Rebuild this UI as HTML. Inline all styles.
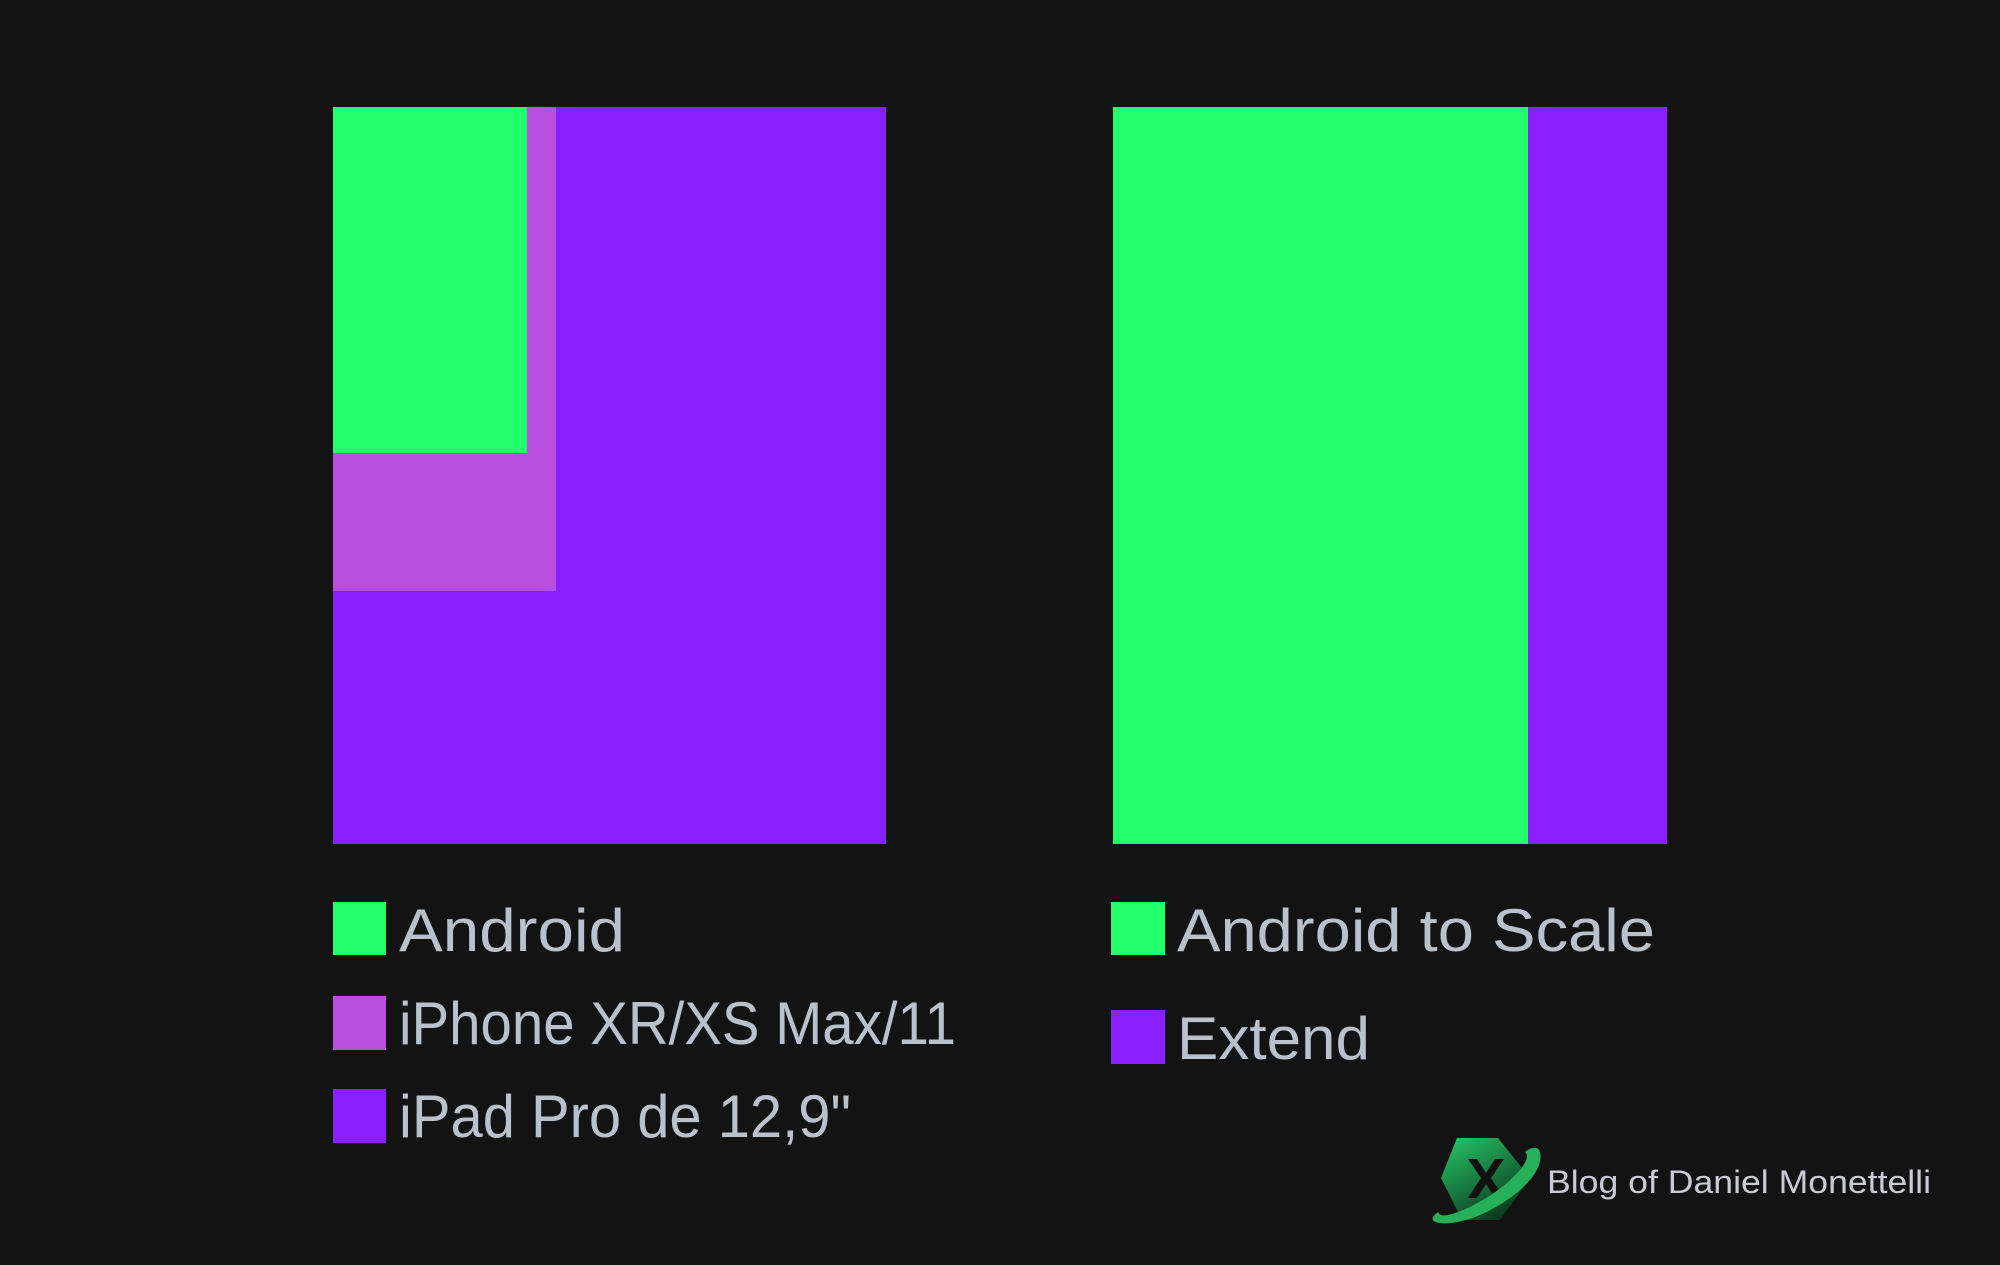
<!DOCTYPE html>
<html><head><meta charset="utf-8"><style>
html,body{margin:0;padding:0;background:#131313;}
svg{display:block}
</style></head><body>
<svg width="2000" height="1265" viewBox="0 0 2000 1265" xmlns="http://www.w3.org/2000/svg">
<rect width="2000" height="1265" fill="#131313"/>
<rect x="333" y="107" width="553" height="737" fill="#8a1fff"/>
<rect x="333" y="107" width="223" height="484" fill="#b84ee0"/>
<rect x="333" y="107" width="194" height="346" fill="#22ff6b"/>
<rect x="1113" y="107" width="554" height="737" fill="#8a1fff"/>
<rect x="1113" y="107" width="415" height="737" fill="#22ff6b"/>
<rect x="333" y="902" width="53" height="53" fill="#22ff6b"/>
<rect x="333" y="996" width="53" height="54" fill="#b84ee0"/>
<rect x="333" y="1089" width="53" height="54" fill="#8a1fff"/>
<rect x="1111" y="902" width="54" height="53" fill="#22ff6b"/>
<rect x="1111" y="1010" width="54" height="54" fill="#8a1fff"/>
<g font-family="Liberation Sans, sans-serif" font-size="60" fill="#b9c1cc">
<text x="399" y="951" textLength="226" lengthAdjust="spacingAndGlyphs">Android</text>
<text x="399" y="1044" textLength="557" lengthAdjust="spacingAndGlyphs">iPhone XR/XS Max/11</text>
<text x="399" y="1137" textLength="452" lengthAdjust="spacingAndGlyphs">iPad Pro de 12,9"</text>
<text x="1177" y="951" textLength="478" lengthAdjust="spacingAndGlyphs">Android to Scale</text>
<text x="1177" y="1059" textLength="193" lengthAdjust="spacingAndGlyphs">Extend</text>
</g>
<defs><linearGradient id="g" x1="0" y1="0" x2="0.6" y2="1"><stop offset="0" stop-color="#27c96a"/><stop offset="1" stop-color="#0c3a1e"/></linearGradient></defs>
<polygon points="1457,1138 1498,1138 1530,1178 1500,1220 1462,1220 1441,1178" fill="url(#g)"/>
<path d="M1468,1159 h9 l9,14 l9,-14 h9 l-13,19 l13,20 h-9 l-9,-14 l-9,14 h-9 l13,-20 z" fill="#111"/>
<path d="M1438,1212 C1420,1225 1450,1228 1480,1215 C1510,1202 1545,1175 1540,1152 C1538,1145 1530,1148 1525,1152 C1535,1160 1505,1190 1470,1207 C1450,1216 1440,1218 1438,1212 z" fill="#27b05a"/>
<text x="1547" y="1193" font-family="Liberation Sans, sans-serif" font-size="32" fill="#c9cad6" textLength="384" lengthAdjust="spacingAndGlyphs">Blog of Daniel Monettelli</text>
</svg>
</body></html>
